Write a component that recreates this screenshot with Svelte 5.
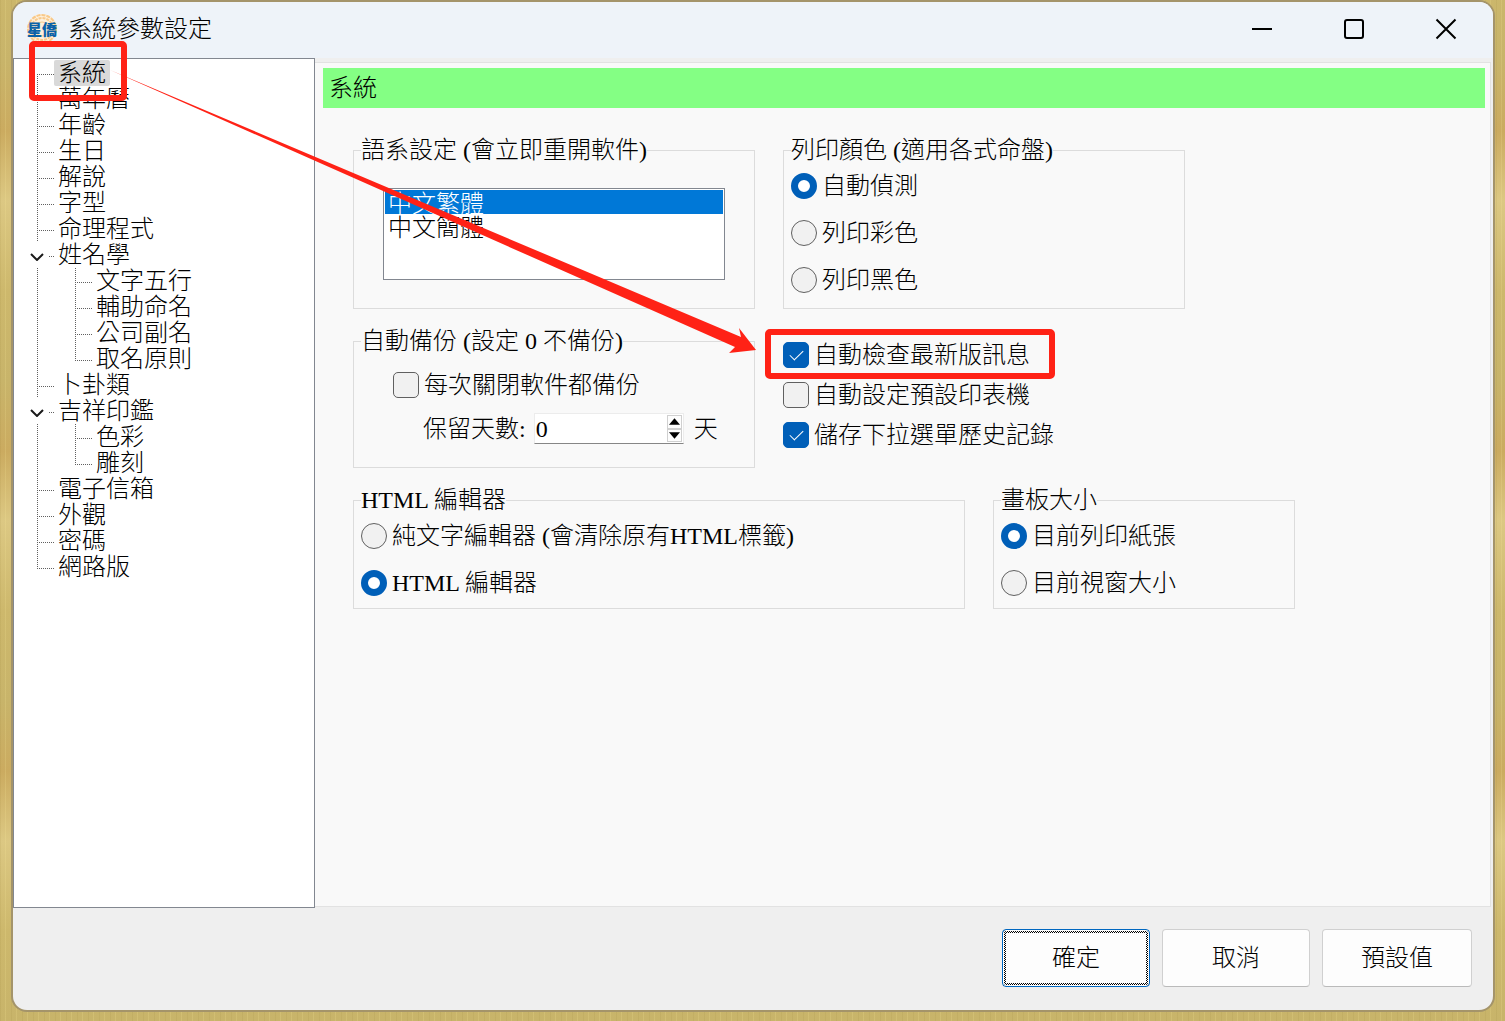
<script>
  let tree = $state([
    { name: '系統' },
    { name: '萬年曆' },
    { name: '年齡' },
    { name: '生日' },
    { name: '解說' },
    { name: '字型' },
    { name: '命理程式' },
    { name: '姓名學', open: true, children: ['文字五行', '輔助命名', '公司副名', '取名原則'] },
    { name: '卜卦類' },
    { name: '吉祥印鑑', open: true, children: ['色彩', '雕刻'] },
    { name: '電子信箱' },
    { name: '外觀' },
    { name: '密碼' },
    { name: '網路版' },
  ]);

  let selected = $state('系統');
  let language = $state('zh-Hant');
  let printColor = $state('auto');
  let editor = $state('html');
  let board = $state('paper');
  let backupOnClose = $state(false);
  let keepDays = $state(0);

  let options = $state([
    { label: '自動檢查最新版訊息', on: true },
    { label: '自動設定預設印表機', on: false },
    { label: '儲存下拉選單歷史記錄', on: true },
  ]);

  const printColors = [
    ['auto', '自動偵測'],
    ['color', '列印彩色'],
    ['black', '列印黑色'],
  ];
  const editors = [
    ['plain', '純文字編輯器 (會清除原有HTML標籤)'],
    ['html', 'HTML 編輯器'],
  ];
  const boards = [
    ['paper', '目前列印紙張'],
    ['window', '目前視窗大小'],
  ];

  function stepDays(delta) {
    keepDays = Math.max(0, (Number(keepDays) || 0) + delta);
  }
</script>

{#snippet treeLabel(name)}
  <button type="button" class="tree-label" class:selected={selected === name}
          onclick={() => (selected = name)}>{name}</button>
{/snippet}

<div class="desktop">
  <main class="window">
    <header class="titlebar">
      <svg class="logo" viewBox="0 0 32 32" aria-hidden="true">
        <circle cx="16" cy="16" r="15" fill="#fdf0dc" />
        <g fill="none" stroke="#f8c98a">
          <circle cx="16" cy="16" r="14" stroke-width="2" stroke-dasharray="4 1" />
          <circle cx="16" cy="16" r="11" stroke-width="2" stroke-dasharray="3 1" />
          <circle cx="16" cy="16" r="7" stroke-width="1" />
        </g>
        <text x="16" y="22" text-anchor="middle">星僑</text>
      </svg>
      <h1>系統參數設定</h1>
      <div class="win-controls">
        <button type="button" aria-label="最小化">
          <svg viewBox="0 0 20 20"><path d="M0 10H20" /></svg>
        </button>
        <button type="button" aria-label="最大化">
          <svg viewBox="0 0 20 20"><rect x="1" y="1" width="18" height="18" rx="2" /></svg>
        </button>
        <button type="button" aria-label="關閉">
          <svg viewBox="0 0 20 20"><path d="M0.500 0.500L19.500 19.500M19.500 0.500L0.500 19.500" /></svg>
        </button>
      </div>
    </header>

    <div class="body">
      <nav class="tree">
        <ul>
          {#each tree as node, i}
            <li>
              <div class="row">
                {#if node.children}
                  <button type="button" class="toggle" aria-label="展開 {node.name}"
                          onclick={() => (node.open = !node.open)}>
                    <svg viewBox="0 0 14 8" class:closed={!node.open}><path d="M1 1L7 7L13 1" /></svg>
                  </button>
                  <span class="stub"></span>
                {:else}
                  <span class="guide" class:first={i === 0} class:last={i === tree.length - 1}></span>
                {/if}
                {@render treeLabel(node.name)}
              </div>
              {#if node.children && node.open}
                <ul>
                  {#each node.children as child, j}
                    <li class="row">
                      <span class="trunk"></span>
                      <span class="guide" class:last={j === node.children.length - 1}></span>
                      {@render treeLabel(child)}
                    </li>
                  {/each}
                </ul>
              {/if}
            </li>
          {/each}
        </ul>
      </nav>

      <section class="panel">
        <h2>{selected}</h2>

        <div class="groups">
          <div class="group-row">
            <fieldset class="medium">
              <legend>語系設定 (會立即重開軟件)</legend>
              <select class="languages" size="3" bind:value={language} aria-label="語系設定">
                <option value="zh-Hant">中文繁體</option>
                <option value="zh-Hans">中文簡體</option>
              </select>
            </fieldset>
            <fieldset class="medium">
              <legend>列印顏色 (適用各式命盤)</legend>
              <div class="choices">
                {#each printColors as [value, label]}
                  <label><input type="radio" name="print" {value} bind:group={printColor} />{label}</label>
                {/each}
              </div>
            </fieldset>
          </div>

          <div class="group-row">
            <fieldset class="medium">
              <legend>自動備份 (設定 0 不備份)</legend>
              <div class="backup">
                <label><input type="checkbox" bind:checked={backupOnClose} />每次關閉軟件都備份</label>
                <div class="days">
                  <label for="keep-days">保留天數:</label>
                  <div class="spin">
                    <input id="keep-days" type="number" min="0" bind:value={keepDays} />
                    <div class="spin-buttons">
                      <button type="button" aria-label="增加" onclick={() => stepDays(1)}>
                        <svg viewBox="0 0 10 6"><path d="M0 6L5 0L10 6Z" /></svg>
                      </button>
                      <button type="button" aria-label="減少" onclick={() => stepDays(-1)}>
                        <svg viewBox="0 0 10 6"><path d="M0 0L5 6L10 0Z" /></svg>
                      </button>
                    </div>
                  </div>
                  <span>天</span>
                </div>
              </div>
            </fieldset>
            <div class="options">
              {#each options as option}
                <label><input type="checkbox" bind:checked={option.on} />{option.label}</label>
              {/each}
            </div>
          </div>

          <div class="group-row">
            <fieldset class="wide">
              <legend>HTML 編輯器</legend>
              <div class="choices">
                {#each editors as [value, label]}
                  <label><input type="radio" name="editor" {value} bind:group={editor} />{label}</label>
                {/each}
              </div>
            </fieldset>
            <fieldset class="narrow">
              <legend>畫板大小</legend>
              <div class="choices">
                {#each boards as [value, label]}
                  <label><input type="radio" name="board" {value} bind:group={board} />{label}</label>
                {/each}
              </div>
            </fieldset>
          </div>
        </div>
      </section>
    </div>

    <footer>
      <button type="button" class="default">確定</button>
      <button type="button">取消</button>
      <button type="button">預設值</button>
    </footer>
  </main>

  <!-- Callout: from the tree item to the update checkbox -->
  <svg class="callout" width="1060" height="385" viewBox="0 0 1060 385" aria-hidden="true">
    <rect x="32" y="44" width="92" height="54" rx="2" />
    <rect x="768" y="332" width="284" height="44" rx="2" />
    <path d="M110 70L741 337L739 328L756 350L729 353L735 347Z" />
  </svg>
</div>

<style>
  :global(body) {
    margin: 0;
    background: #cdb568;
  }

  .desktop {
    position: relative;
    box-sizing: border-box;
    min-height: 100vh;
    padding: 2px 12px 11px 13px;
    display: flex;
    font-family: "Liberation Serif", "Noto Sans CJK TC", sans-serif;
    font-weight: 300;
    font-size: 24px;
    line-height: 26px;
    color: #000;
    background:
      repeating-linear-gradient(90deg, rgba(120, 100, 30, 0.08) 0 1px, transparent 1px 5px, rgba(255, 240, 160, 0.16) 5px 6px, transparent 6px 11px),
      repeating-linear-gradient(0deg, #c8b46a 0, #cdb86c 90px, #dcc883 180px, #cbab60 250px, #c8b46a 320px);
  }

  button,
  input,
  select,
  option {
    font: inherit;
    color: inherit;
  }

  .window {
    flex: 1;
    display: flex;
    flex-direction: column;
    border-radius: 14px;
    background: #efefef;
    box-shadow: 0 0 0 2px #a4946a;
    overflow: hidden;
  }

  /* Title bar */
  .titlebar {
    box-sizing: border-box;
    display: flex;
    align-items: center;
    height: 56px;
    padding: 0 1px 2px 13px;
    background: #eef3f9;
  }
  .logo {
    width: 32px;
    height: 32px;
    margin-right: 10px;
  }
  .logo text {
    font-family: "Noto Sans CJK TC", sans-serif;
    font-size: 15px;
    font-weight: 900;
    fill: #0a62a8;
  }
  h1 {
    margin: 0;
    font-size: 24px;
    font-weight: 300;
    flex: 1;
  }
  .win-controls {
    display: flex;
    align-self: stretch;
  }
  .win-controls button {
    width: 92px;
    padding: 0;
    border: 0;
    background: none;
    display: flex;
    align-items: center;
    justify-content: center;
  }
  .win-controls svg {
    width: 20px;
    height: 20px;
    overflow: visible;
    fill: none;
    stroke: #000;
    stroke-width: 2;
  }

  .body {
    flex: 1;
    display: flex;
  }

  /* Tree */
  .tree {
    box-sizing: border-box;
    width: 302px;
    flex-shrink: 0;
    padding: 1px 0;
    border: 1px solid #828790;
    background: #fff;
  }
  .tree ul {
    margin: 0;
    padding: 0;
    list-style: none;
  }
  .row {
    --dots-v: repeating-linear-gradient(180deg, #606060 0 1px, transparent 1px 2px);
    --dots-h: repeating-linear-gradient(90deg, #606060 0 1px, transparent 1px 2px);
    display: flex;
    height: 26px;
    padding-left: 23px;
  }
  .guide {
    width: 17px;
    background:
      var(--dots-v) 0 0 / 1px 100% no-repeat,
      var(--dots-h) 0 14px / 100% 1px no-repeat;
  }
  .guide.first {
    background:
      var(--dots-v) 0 14px / 1px 12px no-repeat,
      var(--dots-h) 0 14px / 100% 1px no-repeat;
  }
  .guide.last {
    background:
      var(--dots-v) 0 0 / 1px 14px no-repeat,
      var(--dots-h) 0 14px / 100% 1px no-repeat;
  }
  .trunk {
    width: 38px;
    background: var(--dots-v) 0 0 / 1px 100% no-repeat;
  }
  .stub {
    width: 5px;
    background: var(--dots-h) 0 14px / 100% 1px no-repeat;
  }
  .toggle {
    width: 14px;
    margin: 0 5px 0 -7px;
    padding: 3px 0 0;
    border: 0;
    background: none;
    display: flex;
    align-items: center;
  }
  .toggle svg {
    width: 14px;
    height: 8px;
    fill: none;
    stroke: #1a1a1a;
    stroke-width: 2;
  }
  .toggle svg.closed {
    transform: rotate(-90deg);
  }
  .tree-label {
    padding: 1px 4px 0;
    border: 0;
    border-radius: 2px;
    background: none;
    line-height: 25px;
    white-space: nowrap;
  }
  .tree-label.selected {
    background: #d9d9d9;
  }

  /* Settings panel */
  .panel {
    flex: 1;
    margin: 4px 2px 1px 0;
    padding: 5px 5px 5px 8px;
    border: 1px solid #e2e2e2;
    border-left: 0;
    background: #f9f9f9;
  }
  h2 {
    margin: 0;
    padding: 7px 6px;
    font-size: 24px;
    font-weight: 300;
    background: #84ff84;
  }
  .groups {
    display: flex;
    flex-direction: column;
    gap: 16px;
    padding: 26px 30px;
  }
  .group-row {
    display: flex;
    gap: 28px;
  }
  fieldset {
    box-sizing: border-box;
    min-width: 0;
    margin: 0;
    padding: 0 7px;
    border: 1px solid #dcdcdc;
  }
  .narrow {
    flex: 0 1 302px;
  }
  .medium {
    flex: 0 1 402px;
  }
  .wide {
    flex: 0 1 612px;
  }
  legend {
    padding: 0;
    line-height: 32px;
  }
  label {
    display: flex;
    align-items: center;
    gap: 5px;
    white-space: nowrap;
  }
  .choices {
    display: flex;
    flex-direction: column;
    gap: 21px;
    padding: 7px 0 12px;
  }

  input[type="radio"],
  input[type="checkbox"] {
    appearance: none;
    box-sizing: border-box;
    flex-shrink: 0;
    width: 26px;
    height: 26px;
    margin: 0;
    border: 1px solid #606060;
    background: #f1f1f1;
  }
  input[type="radio"] {
    border-radius: 50%;
  }
  input[type="radio"]:checked {
    border: 7px solid #005fb8;
    background: #fff;
  }
  input[type="checkbox"] {
    border-radius: 5px;
    display: grid;
    place-items: center;
  }
  input[type="checkbox"]:checked {
    border-color: #005fb8;
    background: #005fb8;
  }
  input[type="checkbox"]:checked::before {
    content: "";
    width: 13px;
    height: 7px;
    margin-bottom: 4px;
    box-sizing: border-box;
    border: solid #fff;
    border-width: 0 0 1px 1px;
    transform: rotate(-45deg);
  }

  .languages {
    display: block;
    box-sizing: border-box;
    width: calc(100% - 44px);
    height: 92px;
    margin: 22px 22px 28px;
    padding: 1px;
    border: 1px solid #828790;
    border-radius: 0;
    background: #fff;
    overflow: hidden;
    outline: none;
  }
  .languages option {
    display: flex;
    align-items: center;
    box-sizing: border-box;
    height: 24px;
    min-height: 24px;
    padding: 0 3px 2px;
  }
  /* The fill colour keeps the text white while the list has no focus */
  .languages option:checked {
    background: linear-gradient(#0078d7, #0078d7);
    -webkit-text-fill-color: #fff;
  }

  .backup {
    padding: 15px 0 23px 32px;
  }
  .days {
    display: flex;
    align-items: center;
    gap: 8px;
    margin: 15px 0 0 30px;
  }
  .days span {
    padding-left: 2px;
  }
  .spin {
    box-sizing: border-box;
    display: flex;
    width: 150px;
    height: 31px;
    padding: 1px;
    border: 1px solid #ececec;
    border-bottom-color: #868686;
    background: #fff;
  }
  .spin input {
    flex: 1;
    min-width: 0;
    padding: 0;
    border: 0;
    background: none;
    outline: none;
    appearance: textfield;
  }
  .spin input::-webkit-inner-spin-button {
    appearance: none;
    margin: 0;
  }
  .spin-buttons {
    display: flex;
    flex-direction: column;
    width: 15px;
  }
  .spin-buttons button {
    flex: 1;
    display: flex;
    align-items: center;
    justify-content: center;
    padding: 0;
    border: 1px solid #d0d0d0;
    background: #fdfdfd;
  }
  .spin-buttons svg {
    width: 11px;
    height: 7px;
  }

  .options {
    display: flex;
    flex-direction: column;
    gap: 14px;
    padding-top: 17px;
  }

  footer {
    display: flex;
    justify-content: flex-end;
    gap: 12px;
    padding: 21px 21px 23px;
  }
  footer button {
    box-sizing: border-box;
    min-width: 148px;
    height: 58px;
    padding: 0 38px;
    border: 1px solid #d0d0d0;
    border-bottom-color: #bababa;
    border-radius: 4px;
    background: #fdfdfd;
  }
  /* Checkered focus ring just inside the border */
  footer .default {
    border-color: #0067c0;
    background:
      linear-gradient(#fdfdfd, #fdfdfd) center / calc(100% - 6px) calc(100% - 6px) no-repeat,
      repeating-conic-gradient(#000 0 25%, #fdfdfd 0 50%) 0 0 / 2px 2px;
    box-shadow: inset 0 0 0 1px #fdfdfd;
  }

  .callout {
    position: absolute;
    top: 0;
    left: 0;
    pointer-events: none;
  }
  .callout rect {
    fill: none;
    stroke: #ff2216;
    stroke-width: 6;
    stroke-linejoin: round;
  }
  .callout path {
    fill: #ff2216;
  }
</style>
